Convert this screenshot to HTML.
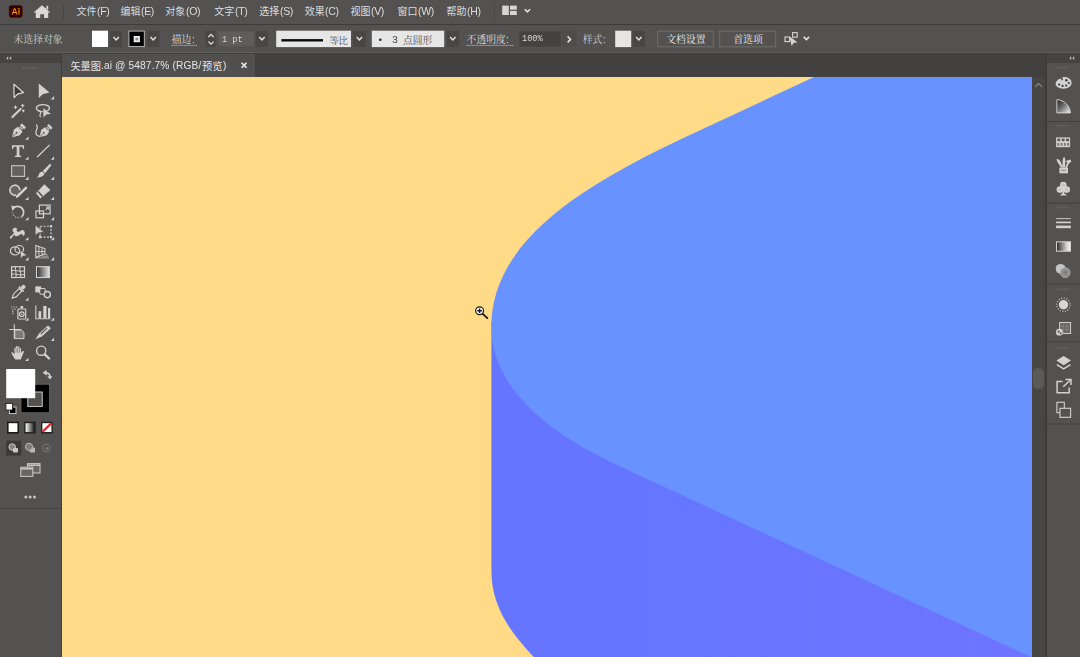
<!DOCTYPE html>
<html lang="zh">
<head>
<meta charset="utf-8">
<title>矢量图.ai @ 5487.7% (RGB/预览)</title>
<style>
*{box-sizing:border-box;margin:0;padding:0}
html,body{width:1080px;height:657px;overflow:hidden;background:#52514f;font-family:"Liberation Sans",sans-serif;color:#e0e0e0}
#app{position:relative;width:1080px;height:657px;overflow:hidden;background:#52514f}
.abs{position:absolute}
#menubar{position:absolute;left:0;top:0;width:1080px;height:24px;background:#535250}
#menuline{position:absolute;left:0;top:24px;width:1080px;height:1px;background:#3d3c3b}
#ctrlbar{position:absolute;left:0;top:25px;width:1080px;height:27px;background:#535250}
#ctrlline{position:absolute;left:0;top:52px;width:1080px;height:1px;background:#5e5d5b}
#tabbar{position:absolute;left:0;top:53px;width:1080px;height:24px;background:#424140}
#tab{position:absolute;left:62px;top:54px;width:193px;height:23px;background:#51504e}
#toolbox{position:absolute;left:0;top:53px;width:61px;height:604px;background:#535250}
#toolhead{position:absolute;left:0;top:53px;width:61px;height:10px;background:#454443}
#toolsep{position:absolute;left:61px;top:53px;width:1px;height:604px;background:#3f3e3d}
#canvas{position:absolute;left:62px;top:77px;width:970px;height:580px;background:#ffda87;overflow:hidden}
#vscroll{position:absolute;left:1032px;top:77px;width:13px;height:580px;background:#474644}
#vthumb{position:absolute;left:1033px;top:368px;width:11px;height:21px;border-radius:5px;background:#5b5a58}
#rsep{position:absolute;left:1045px;top:53px;width:2px;height:604px;background:#3d3c3b}
#rpanel{position:absolute;left:1047px;top:53px;width:33px;height:604px;background:#535250}
#rhead{position:absolute;left:1047px;top:53px;width:33px;height:10px;background:#454443}
.rline{position:absolute;left:1047px;width:33px;height:1px;background:#434241}
.grip{position:absolute;height:2px;opacity:.55;background:repeating-linear-gradient(90deg,#6d6c6a 0 2px,transparent 2px 3px)}
svg{position:absolute;overflow:visible}
.t{position:absolute;white-space:nowrap;line-height:1;will-change:transform}
</style>
</head>
<body>
<div id="app">
  <div id="menubar"></div>
  <div id="menuline"></div>
  <div id="ctrlbar"></div>
  <div id="ctrlline"></div>
  <div id="tabbar"></div>
  <div id="tab"></div>

  <!--TOP-->
<svg id="top" role="img" aria-label="文件 编辑 对象 文字 选择 效果 视图 窗口 帮助 未选择对象 描边 等比 点圆形 不透明度 样式 文档设置 首选项 矢量图 预览" width="1080" height="78" viewBox="0 0 1080 78" style="left:0;top:0">
<rect x="9.2" y="5.4" width="13" height="12" rx="2.2" fill="#330000"/><rect x="9.2" y="5.4" width="13" height="12" rx="2.2" fill="none" stroke="#4a0d05" stroke-width=".6"/>
<path d="M11.6 14.6L14 8.2H15.2L17.6 14.6H16.4L15.9 13.1H13.3L12.8 14.6ZM13.6 12.1H15.6L14.6 9.3ZM18.4 9.6H19.5V14.6H18.4ZM18.3 8.1H19.6V9H18.3Z" fill="#ff9a00"/>
<path d="M42 5.2L50.4 12.4H48.2V18H44V14.2H40.2V18H35.8V12.4H33.6Z" fill="#d8d8d8"/><rect x="46.4" y="5.8" width="1.8" height="3.6" fill="#d8d8d8"/>
<rect x="63" y="5" width="1" height="15" fill="#484746"/>
<rect x="494" y="5" width="1" height="15" fill="#484746"/>
<rect x="502.2" y="5.6" width="6.6" height="9.4" fill="#d6d6d6"/><rect x="510" y="5.6" width="6.8" height="4.1" fill="#d6d6d6"/><rect x="510" y="10.9" width="6.8" height="4.1" fill="#d6d6d6"/>
<path d="M524.7 9.2L527.4 11.9L530.1 9.2" fill="none" stroke="#e2e2e2" stroke-width="1.5"/>
<rect x="92" y="30.7" width="16" height="16.3" fill="#ffffff"/>
<rect x="110.4" y="31" width="11.6" height="16" fill="#484745"/>
<path d="M113.5 37.1L116.2 39.9L118.9 37.1" fill="none" stroke="#e2e2e2" stroke-width="1.5"/>
<rect x="128.9" y="31.1" width="15.4" height="15.5" fill="#000" stroke="#c4c4c4" stroke-width=".9"/><rect x="133.7" y="36" width="6.2" height="6.2" fill="#f2f2f2"/><rect x="135.4" y="37.7" width="2.8" height="2.8" fill="#8a8a8a"/>
<rect x="147.4" y="31" width="12" height="16" fill="#484745"/>
<path d="M150.5 37.1L153.2 39.9L155.9 37.1" fill="none" stroke="#e2e2e2" stroke-width="1.5"/>
<path d="M171.6 45.4H197.6" stroke="#cfcfcf" stroke-width="1" stroke-dasharray="1 1"/>
<rect x="205.4" y="31" width="10" height="16" fill="#484745"/>
<path d="M208.4 37L211 34.4L213.6 37M208.4 41.6L211 44.2L213.6 41.6" fill="none" stroke="#e2e2e2" stroke-width="1.3"/>
<rect x="218.6" y="31.6" width="35.4" height="14.8" fill="#5e5d5b"/>
<rect x="255.6" y="31" width="12.4" height="16" fill="#484745"/>
<path d="M259.3 37.1L262.0 39.9L264.7 37.1" fill="none" stroke="#e2e2e2" stroke-width="1.5"/>
<rect x="276.2" y="30.7" width="74.8" height="16.4" fill="#e6e6e6"/><rect x="281.4" y="39.1" width="41.6" height="2.4" fill="#0a0a0a"/>
<rect x="352.8" y="31" width="13" height="16" fill="#484745"/>
<path d="M356.7 37.1L359.4 39.9L362.1 37.1" fill="none" stroke="#e2e2e2" stroke-width="1.5"/>
<rect x="371.8" y="30.7" width="72.4" height="16.4" fill="#e6e6e6"/><circle cx="380.3" cy="39.8" r="1.3" fill="#222"/>
<rect x="446.8" y="31" width="12.4" height="16" fill="#484745"/>
<path d="M450.1 37.1L452.8 39.9L455.5 37.1" fill="none" stroke="#e2e2e2" stroke-width="1.5"/>
<path d="M466.4 45.4H513.4" stroke="#cfcfcf" stroke-width="1" stroke-dasharray="1 1"/>
<rect x="519.4" y="31.4" width="41.2" height="15.2" fill="#444342"/>
<rect x="562.4" y="31" width="14" height="16" fill="#4e4d4b"/>
<path d="M567.6 36.4L570.6 39.4L567.6 42.4" fill="none" stroke="#e2e2e2" stroke-width="1.5"/>
<rect x="615.2" y="30.7" width="16" height="16.4" fill="#e8e6e4"/>
<rect x="632.6" y="31" width="12.4" height="16" fill="#484745"/>
<path d="M636.1 37.1L638.8 39.9L641.5 37.1" fill="none" stroke="#e2e2e2" stroke-width="1.5"/>
<rect x="657.7" y="31.2" width="55.6" height="15.6" fill="none" stroke="#706f6d" stroke-width="1"/>
<rect x="719.7" y="31.2" width="56" height="15.6" fill="none" stroke="#706f6d" stroke-width="1"/>
<rect x="785" y="37" width="4.6" height="4.6" fill="none" stroke="#d6d6d6" stroke-width="1.1"/><rect x="792.6" y="32.6" width="4.6" height="4.6" fill="none" stroke="#d6d6d6" stroke-width="1.1"/><path d="M789.6 36.6L797.6 42.4L793.8 42.8L791.6 46Z" fill="#d6d6d6"/>
<path d="M803.7 36.9L806.4 39.6L809.1 36.9" fill="none" stroke="#e2e2e2" stroke-width="1.5"/>
<path d="M241.6 62.8L246.6 67.8M246.6 62.8L241.6 67.8" stroke="#ececec" stroke-width="1.6"/>
<g font-family="'Liberation Sans','Noto Sans CJK SC',sans-serif" font-size="10" fill="#dddddd">
<text x="76.5" y="14.9">文件</text>
<text x="120.4" y="14.9">编辑</text>
<text x="165.3" y="14.9">对象</text>
<text x="214.2" y="14.9">文字</text>
<text x="259.3" y="14.9">选择</text>
<text x="304.7" y="14.9">效果</text>
<text x="350.4" y="14.9">视图</text>
<text x="397.6" y="14.9">窗口</text>
<text x="446.5" y="14.9">帮助</text>
</g>
<g font-family="'Liberation Serif','Noto Serif CJK SC',serif" font-size="9.8">
<text x="171.7" y="43.2" fill="#dddddd">描边</text>
<text x="466.6" y="43.2" fill="#dddddd">不透明度</text>
<text x="13.6" y="43.2" fill="#cfcfcf">未选择对象</text>
<text x="582.7" y="43.2" fill="#cfcfcf">样式</text>
<text x="329.2" y="44.2" font-size="9.4" fill="#4a4a4a">等比</text>
<text x="403" y="43.6" font-size="9.8" fill="#4a4a4a">点圆形</text>
<text x="666.3" y="43.2" fill="#ececec">文档设置</text>
<text x="733.4" y="43.2" fill="#ececec">首选项</text>
</g>
<g font-family="'Liberation Sans','Noto Sans CJK SC',sans-serif" font-size="10.2" fill="#e6e6e6">
<text x="70.4" y="69.5">矢量图</text>
<text x="202.1" y="69.5">预览</text>
</g>
</svg>
<span class="t" style="left:96.9px;top:6.1px;font-size:10.5px;color:#dddddd;letter-spacing:-0.32px">(F)</span>
<span class="t" style="left:140.8px;top:6.1px;font-size:10.5px;color:#dddddd;letter-spacing:-0.32px">(E)</span>
<span class="t" style="left:185.6px;top:6.1px;font-size:10.5px;color:#dddddd;letter-spacing:-0.32px">(O)</span>
<span class="t" style="left:234.6px;top:6.1px;font-size:10.5px;color:#dddddd;letter-spacing:-0.32px">(T)</span>
<span class="t" style="left:279.6px;top:6.1px;font-size:10.5px;color:#dddddd;letter-spacing:-0.32px">(S)</span>
<span class="t" style="left:325.1px;top:6.1px;font-size:10.5px;color:#dddddd;letter-spacing:-0.32px">(C)</span>
<span class="t" style="left:370.8px;top:6.1px;font-size:10.5px;color:#dddddd;letter-spacing:-0.32px">(V)</span>
<span class="t" style="left:417.6px;top:6.1px;font-size:10.5px;color:#dddddd;letter-spacing:-0.32px">(W)</span>
<span class="t" style="left:466.8px;top:6.1px;font-size:10.5px;color:#dddddd;letter-spacing:-0.32px">(H)</span>
<span class="t" style="left:191.6px;top:34.7px;font-size:10px;color:#dddddd">:</span>
<span class="t" style="left:221.6px;top:35.5px;font-size:8.6px;color:#d8d8d8;font-family:'Liberation Mono',monospace">1 pt</span>
<span class="t" style="left:392.2px;top:35.6px;font-size:10px;color:#444;font-family:'Liberation Mono',monospace">3</span>
<span class="t" style="left:506.4px;top:34.7px;font-size:10px;color:#dddddd">:</span>
<span class="t" style="left:522.0px;top:35.3px;font-size:8.6px;color:#d8d8d8;font-family:'Liberation Mono',monospace">100%</span>
<span class="t" style="left:602.6px;top:34.7px;font-size:10px;color:#cfcfcf">:</span>
<span class="t" style="left:101.4px;top:60.9px;font-size:10.2px;color:#e6e6e6;letter-spacing:0.12px">.ai @ 5487.7% (RGB/</span>
<span class="t" style="left:222.7px;top:60.9px;font-size:10.2px;color:#e6e6e6;letter-spacing:0.12px">)</span>
<!--/TOP-->

  <!-- CANVAS -->
  <div id="canvas">
    <svg width="970" height="580" viewBox="62 77 970 580" style="left:0;top:0">
      <defs><linearGradient id="db" gradientUnits="userSpaceOnUse" x1="491" y1="0" x2="1032" y2="0"><stop offset="0" stop-color="#6575ff"/><stop offset=".45" stop-color="#6775ff"/><stop offset="1" stop-color="#6f74ff"/></linearGradient></defs>
      <path d="M491.4 322 L491.4 570.9 C491.4 613.8 519.2 647.2 570.7 691.6 L1040 691.6 L1040 322 Z" fill="url(#db)"/>
      <path d="M814 77 L686.6 136.6 C575.2 188.8 491.4 244 491.4 327 L491.4 327 C491.4 406.2 588.4 451.8 624.5 468.5 L1045 663.4 L1045 77 Z" fill="#6892ff"/>
      <circle cx="479.6" cy="310.7" r="3.9" fill="#fbfbfb" stroke="#1c1608" stroke-width="1.2"/>
      <path d="M477.3 310.7h4.6M479.6 308.4v4.6" stroke="#16122a" stroke-width="1.4"/>
      <path d="M482.7 313.9L487.4 318.2" stroke="#15110a" stroke-width="1.7" stroke-linecap="round"/>
    </svg>
  </div>
  <div id="vscroll"></div>
  <div id="vthumb"></div>

  <!-- LEFT TOOLBOX -->
  <div id="toolbox"></div>
  <div id="toolhead"></div>
  <div id="toolsep"></div>
  <div class="grip" style="left:22px;top:67px;width:16px"></div>
  <div class="abs" style="left:0;top:508px;width:61px;height:1px;background:#454443"></div>
  <svg id="tools" width="62" height="657" viewBox="0 0 62 657" style="left:0;top:0">
<!--TOOLS-->
<g transform="translate(10.0 83.0)"><path d="M3.9 1.2 L13.4 9.6 L7.7 11 L4.1 14.6 Z" fill="#3b3a39" stroke="#d2d2d2" stroke-width="1.3" stroke-linejoin="round"/></g>
<g transform="translate(35.5 83.0)"><path d="M3.3 .6 L14 9.6 L7.2 11.2 L3.3 15.1 Z" fill="#d2d2d2"/></g>
<path d="M54.1 96.1v3.3h-3.3z" fill="#d2d2d2"/>
<g transform="translate(10.0 103.1)"><path d="M2.4 14 L10.6 6" fill="none" stroke="#d2d2d2" stroke-width="2.1" stroke-linecap="round"/><path d="M5.5 2.3v3.6M3.7 4.1h3.6M12.6 .9v3.4M10.9 2.6h3.4M13.3 6.3v2.8M11.9 7.7h2.8" fill="none" stroke="#d2d2d2" stroke-width="1.1"/></g>
<g transform="translate(35.5 103.1)"><ellipse cx="7.4" cy="5" rx="6.6" ry="3.5" fill="none" stroke="#d2d2d2" stroke-width="1.3"/><path d="M3.2 7.6c1.8 .6 2.6 2.2 1.6 3.4c-.8 1 -.4 2.2 .4 2.9" fill="none" stroke="#d2d2d2" stroke-width="1.2"/><path d="M7.6 4.6 L16 11 L11 11.6 L7.6 14.8 Z" fill="#d2d2d2" stroke="#535250" stroke-width=".6"/></g>
<g transform="translate(10.0 123.3)"><g transform="rotate(45 8 8)"><rect x="5.1" y="-.4" width="5.8" height="2.7" rx=".5" fill="#d2d2d2"/><rect x="5.9" y="3" width="4.2" height="1.2" fill="#d2d2d2"/><path d="M4.7 4.9H11.3L12.1 9.6L8 16.6L3.9 9.6Z" fill="#d2d2d2"/><path d="M8 16.4V11" stroke="#535250" stroke-width=".8"/><circle cx="8" cy="10" r="1" fill="#535250"/></g></g>
<path d="M28.5 136.4v3.3h-3.3z" fill="#d2d2d2"/>
<g transform="translate(35.5 123.3)"><g transform="translate(1.6 .2) rotate(45 8 8) scale(.94) translate(.5 .5)"><rect x="5.1" y="-.4" width="5.8" height="2.7" rx=".5" fill="#d2d2d2"/><rect x="5.9" y="3" width="4.2" height="1.2" fill="#d2d2d2"/><path d="M4.7 4.9H11.3L12.1 9.6L8 16.6L3.9 9.6Z" fill="#d2d2d2"/><path d="M8 16.4V11" stroke="#535250" stroke-width=".8"/><circle cx="8" cy="10" r="1" fill="#535250"/></g><path d="M1 1.6C3.2 4.4 .6 6.4 .4 8.6S1.4 12.6 4 13" fill="none" stroke="#d2d2d2" stroke-width="1.2" stroke-linecap="round"/></g>
<g transform="translate(10.0 143.4)"><path d="M2 1.9H14.1V5.6H13.1L12.4 3.4H9.4V12.2L11.3 12.7V13.7H4.8V12.7L6.7 12.2V3.4H3.7L3 5.6H2Z" fill="#d2d2d2"/></g>
<path d="M28.5 156.5v3.3h-3.3z" fill="#d2d2d2"/>
<g transform="translate(35.5 143.4)"><path d="M1.9 13.4L13.9 1.7" fill="none" stroke="#d2d2d2" stroke-width="1.3" stroke-linecap="round"/></g>
<path d="M54.1 156.5v3.3h-3.3z" fill="#d2d2d2"/>
<g transform="translate(10.0 163.5)"><rect x="1.6" y="2.2" width="12.9" height="10.7" fill="#636261" stroke="#bebebe" stroke-width="1.2"/></g>
<path d="M28.5 176.6v3.3h-3.3z" fill="#d2d2d2"/>
<g transform="translate(35.5 163.5)"><path d="M14.6 .2L16 1.5L9.6 9.8L7.2 7.6Z" fill="#d2d2d2"/><path d="M7 8.3L8.9 10C8.6 12.6 5.4 14.2 1 13.9C3.2 13 3 11.6 3.6 10.2C4.2 8.8 5.6 8 7 8.3Z" fill="#d2d2d2"/></g>
<path d="M54.1 176.6v3.3h-3.3z" fill="#d2d2d2"/>
<g transform="translate(10.0 183.6)"><circle cx="5" cy="6.5" r="4.9" fill="#686766" stroke="none"/><path d="M6.2 11.4A5 5 0 1 1 9.9 6.6" fill="none" stroke="#d2d2d2" stroke-width="1.6"/><path d="M7 13L16 4.2" fill="none" stroke="#d2d2d2" stroke-width="2.5" stroke-linecap="round"/></g>
<path d="M28.5 196.7v3.3h-3.3z" fill="#d2d2d2"/>
<g transform="translate(35.5 183.6)"><path d="M8.8 .7L14.9 6.4L4.9 14.8L.5 9.6Z" fill="#d2d2d2"/><path d="M2.6 8L7 12.8" stroke="#535250" stroke-width="1.5"/></g>
<path d="M54.1 196.7v3.3h-3.3z" fill="#d2d2d2"/>
<g transform="translate(10.0 203.8)"><path d="M3.4 4.2A6 6 0 1 1 11.8 12.9" fill="none" stroke="#d2d2d2" stroke-width="1.7"/><path d="M11.8 12.9A6 6 0 0 1 2.5 8.6" fill="none" stroke="#d2d2d2" stroke-width="1.2" stroke-dasharray="1.4 1.4" opacity=".75"/><path d="M1.2 1.8L6.4 3L2.4 7Z" fill="#d2d2d2"/></g>
<path d="M28.5 216.9v3.3h-3.3z" fill="#d2d2d2"/>
<g transform="translate(35.5 203.8)"><rect x="3.9" y="1.3" width="10.7" height="8.7" fill="none" stroke="#d2d2d2" stroke-width="1.2"/><rect x=".4" y="7.2" width="7.6" height="6.8" fill="none" stroke="#d2d2d2" stroke-width="1.2"/><path d="M10 6.4L12.8 3.6M10.6 3.2H13.2V5.8" fill="none" stroke="#d2d2d2" stroke-width="1.1"/></g>
<path d="M54.1 216.9v3.3h-3.3z" fill="#d2d2d2"/>
<g transform="translate(10.0 223.9)"><path d="M.8 13.6L5.4 8.6" fill="none" stroke="#d2d2d2" stroke-width="1.3"/><circle cx=".9" cy="13.5" r="1.1" fill="#d2d2d2"/><path d="M2.6 5.4C4.8 2.4 8 4.2 6.8 6.2C5.8 8 8.8 8.6 10.4 7C12.2 5.2 15.2 6.6 14.8 9.6C14.4 12.2 12.8 12.6 12.6 10.8C12.4 9.4 10 10.4 8.6 11.6C6.8 13 4.2 12.6 4.6 10.4C5 8.6 2.2 8.6 2.6 5.4Z" fill="#d2d2d2"/></g>
<path d="M28.5 237.0v3.3h-3.3z" fill="#d2d2d2"/>
<g transform="translate(35.5 223.9)"><rect x="4.6" y="2.3" width="10.9" height="10.9" fill="none" stroke="#d2d2d2" stroke-width="1.1" stroke-dasharray="2 1.4"/><rect x="14.4" y="1.2" width="2.2" height="2.2" fill="#d2d2d2"/><rect x="14.4" y="12.1" width="2.2" height="2.2" fill="#d2d2d2"/><rect x="3.5" y="12.1" width="2.2" height="2.2" fill="#d2d2d2"/><path d="M-.2 1.4L8.4 8.2L3.4 8.6L-.2 11.2Z" fill="#d2d2d2" stroke="#535250" stroke-width=".5"/></g>
<path d="M54.1 237.0v3.3h-3.3z" fill="#d2d2d2"/>
<g transform="translate(10.0 244.0)"><ellipse cx="5" cy="6.9" rx="4.6" ry="4.1" fill="none" stroke="#d2d2d2" stroke-width="1.2"/><ellipse cx="9.3" cy="5.2" rx="4.3" ry="3.7" fill="none" stroke="#d2d2d2" stroke-width="1.2"/><path d="M10.4 6.4L17 11.6L13 12L10.8 14.6Z" fill="#d2d2d2" stroke="#535250" stroke-width=".5"/></g>
<path d="M28.5 257.1v3.3h-3.3z" fill="#d2d2d2"/>
<g transform="translate(35.5 244.0)"><path d="M.3 1.6L9.4 4.6V9.8L.3 13.6Z" fill="none" stroke="#d2d2d2" stroke-width="1.1"/><path d="M3.4 2.6V12.4M6.5 3.6V11.2M.3 7.6H9.4" fill="none" stroke="#d2d2d2" stroke-width="1"/><path d="M9.4 10.6H12M6.5 12.2H13M.3 13.9H13.6" fill="none" stroke="#d2d2d2" stroke-width=".9" opacity=".8"/></g>
<path d="M54.1 257.1v3.3h-3.3z" fill="#d2d2d2"/>
<g transform="translate(10.0 264.2)"><rect x="1.6" y="2.5" width="12.9" height="10.8" fill="none" stroke="#d2d2d2" stroke-width="1.2"/><path d="M1.6 6.4C5 5 10 8.4 14.5 6.6M1.6 10C5 8.8 10 12 14.5 10.2M5.6 2.5C4.4 6 7.4 9.6 5.8 13.3M10.2 2.5C9 6 12 9.6 10.4 13.3" fill="none" stroke="#d2d2d2" stroke-width="1"/></g>
<g transform="translate(35.5 264.2)"><defs><linearGradient id="gt"><stop offset="0" stop-color="#2e2e2e"/><stop offset="1" stop-color="#e4e4e4"/></linearGradient></defs><rect x="1" y="2.5" width="12.9" height="10.8" fill="url(#gt)" stroke="#d2d2d2" stroke-width="1.1"/></g>
<g transform="translate(10.0 284.3)"><g transform="rotate(45 8 8)"><rect x="6" y="-1.6" width="4" height="4.2" rx="1.6" fill="#d2d2d2"/><rect x="4.6" y="2.6" width="6.8" height="1.5" fill="#d2d2d2"/><path d="M6.1 4.6H9.9V12.6L8 16.2L6.1 12.6Z" fill="none" stroke="#d2d2d2" stroke-width="1.1"/></g></g>
<path d="M28.5 297.4v3.3h-3.3z" fill="#d2d2d2"/>
<g transform="translate(35.5 284.3)"><rect x="-.2" y="2.1" width="5.8" height="6" fill="#d2d2d2"/><rect x="4.2" y="4.2" width="5.6" height="5.8" rx="1.6" fill="#535250" stroke="#d2d2d2" stroke-width="1.1"/><circle cx="11.8" cy="10.3" r="3.1" fill="#535250" stroke="#d2d2d2" stroke-width="1.4"/></g>
<g transform="translate(10.0 304.4)"><rect x="7.9" y="4.6" width="7.8" height="10" rx=".8" fill="none" stroke="#d2d2d2" stroke-width="1.2"/><rect x="10.4" y="1.7" width="2.8" height="2.4" fill="#d2d2d2"/><circle cx="11.8" cy="9.8" r="2.3" fill="none" stroke="#d2d2d2" stroke-width="1.2"/><circle cx="11.8" cy="9.8" r=".8" fill="#d2d2d2"/><path d="M1 2.6h1.3M3.4 2.6h1.3M5.8 2.6h1.2M2.2 4.8h1.3M4.6 4.8h1.3M2.2 7h1.3M2.2 9h1.3" fill="none" stroke="#d2d2d2" stroke-width="1.1" opacity=".85"/></g>
<path d="M28.5 317.5v3.3h-3.3z" fill="#d2d2d2"/>
<g transform="translate(35.5 304.4)"><path d="M.3 1.2V14.3H15" fill="none" stroke="#d2d2d2" stroke-width="1.1"/><rect x="3" y="6.8" width="2.7" height="7" fill="#d2d2d2"/><rect x="7.8" y="1.6" width="3.2" height="12.2" fill="#d2d2d2"/><rect x="12.5" y="3.6" width="2.2" height="10.2" fill="#d2d2d2"/></g>
<path d="M54.1 317.5v3.3h-3.3z" fill="#d2d2d2"/>
<g transform="translate(10.0 324.6)"><path d="M4.8 5.4H11.4L14 8V14H4.8Z" fill="#7b7a79" stroke="#d2d2d2" stroke-width="1"/><path d="M4.3 -.3V14.1M-.6 4.9H11" fill="none" stroke="#d2d2d2" stroke-width="1.1"/></g>
<g transform="translate(35.5 324.6)"><path d="M12.4 .8L15.4 3.6L6.6 11.6L-.2 15L3.6 8.8Z" fill="#d2d2d2"/><path d="M5.4 9.4L11.6 3.6" stroke="#535250" stroke-width="1.1"/></g>
<path d="M54.1 337.7v3.3h-3.3z" fill="#d2d2d2"/>
<g transform="translate(10.0 344.7)"><path d="M5.2 14.7C3.6 12.4 2.2 10.4 1.5 8.6C1.2 7.6 2.4 7.2 3 8L4.4 9.8V3.6C4.4 2.5 6 2.5 6 3.6V7V2.2C6 1.1 7.7 1.1 7.7 2.2V7V2.6C7.7 1.5 9.4 1.5 9.4 2.6V7.4V4C9.4 3 11 3 11 4V8.2L12.4 6.6C13.2 5.8 14.4 6.6 13.8 7.6C12.8 9.6 12 12 10.8 14.7Z" fill="#d2d2d2"/><path d="M6 3.4V8M7.7 2.6V8M9.4 3.4V8" stroke="#535250" stroke-width=".55"/></g>
<path d="M28.5 357.8v3.3h-3.3z" fill="#d2d2d2"/>
<g transform="translate(35.5 344.7)"><circle cx="5.7" cy="6" r="4.6" fill="none" stroke="#d2d2d2" stroke-width="1.4"/><path d="M9.2 9.6L13.6 13.8" fill="none" stroke="#d2d2d2" stroke-width="2.3" stroke-linecap="round"/></g>
<rect x="21" y="384.2" width="28.6" height="28.6" fill="#000" stroke="#6e6d6b" stroke-width=".8"/>
<rect x="27.8" y="392" width="14.4" height="14.4" fill="#535250" stroke="#dcdcdc" stroke-width=".9"/>
<rect x="6.2" y="369" width="29" height="29.2" fill="#ffffff"/>
<path d="M45.2 373.2C48.6 372.6 50.2 374.4 50 377.4" fill="none" stroke="#d2d2d2" stroke-width="1.6"/><path d="M42.6 372.8L46.6 370V375.6Z" fill="#d2d2d2"/><path d="M47.4 376.2H52.4L49.9 379.6Z" fill="#d2d2d2"/>
<rect x="9.4" y="407" width="6.6" height="6.6" fill="#000" stroke="#d8d8d8" stroke-width=".9"/><rect x="5.9" y="403.4" width="6.6" height="6.6" fill="#fff" stroke="#222" stroke-width=".9"/>
<rect x="7" y="421.6" width="12" height="12" fill="#1c1c1c"/><rect x="8.6" y="423.2" width="8.8" height="8.8" fill="#fff"/>
<defs><linearGradient id="g2"><stop offset="0" stop-color="#fff"/><stop offset="1" stop-color="#1a1a1a"/></linearGradient></defs><rect x="24.2" y="421.6" width="11.6" height="12" fill="#262626"/><rect x="25.6" y="423.2" width="8.8" height="8.8" fill="url(#g2)"/>
<rect x="41" y="421.6" width="11.8" height="12" fill="#262626"/><rect x="42.4" y="423.2" width="9" height="8.8" fill="#fff"/><path d="M42.6 431.8L51.2 423.4" stroke="#e0242c" stroke-width="2.3"/>
<rect x="6.2" y="440.8" width="15" height="14.6" rx="1" fill="#3b3a39"/>
<g opacity="1"><circle cx="12.2" cy="447.0" r="3.3" fill="#858585" stroke="#c4c4c4" stroke-width="1"/><rect x="13.0" y="448.0" width="5" height="4.6" rx=".8" fill="#c8c8c8"/></g>
<g opacity=".8"><rect x="29.6" y="447.6" width="5.4" height="5" rx=".8" fill="#d2d2d2"/><circle cx="29" cy="446.8" r="3.6" fill="#8a8a8a" stroke="#d2d2d2" stroke-width="1"/></g>
<g opacity=".28"><circle cx="46.4" cy="448" r="3.8" fill="none" stroke="#d2d2d2" stroke-width="1.1"/><circle cx="47" cy="448.6" r="1.6" fill="#d2d2d2"/></g>
<rect x="27.6" y="463.6" width="12.4" height="9.4" fill="#676665" stroke="#c4c4c4" stroke-width="1.1"/><path d="M27.6 465.2H40" stroke="#c4c4c4" stroke-width="1.6"/><rect x="20.8" y="467.2" width="12" height="9.2" fill="#676665" stroke="#c4c4c4" stroke-width="1.1"/><path d="M20.8 468.8H32.8" stroke="#c4c4c4" stroke-width="1.6"/>
<circle cx="25.9" cy="497" r="1.5" fill="#c6c6c6"/><circle cx="30.2" cy="497" r="1.5" fill="#c6c6c6"/><circle cx="34.5" cy="497" r="1.5" fill="#c6c6c6"/>
<path d="M8.2 56.3L6.4 58.2L8.2 60.1ZM11.2 56.3L9.4 58.2L11.2 60.1Z" fill="#c8c8c8"/>
<!--/TOOLS-->
  </svg>

  <!-- RIGHT PANEL -->
  <div id="rsep"></div>
  <div id="rpanel"></div>
  <div id="rhead"></div>
  <svg id="rp" width="48" height="657" viewBox="1032 0 48 657" style="left:1032px;top:0">
<!--RP-->
<path d="M1071.2 56.3L1069.4 58.2L1071.2 60.1ZM1074.2 56.3L1072.4 58.2L1074.2 60.1Z" fill="#c8c8c8"/>
<path d="M1035.2 86.9L1038.6 83.5L1042 86.9" fill="none" stroke="#8c8b89" stroke-width="1.2"/>
<rect x="1047" y="121.0" width="33" height="1" fill="#41403f"/>
<rect x="1047" y="202.5" width="33" height="1" fill="#41403f"/>
<rect x="1047" y="283.5" width="33" height="1" fill="#41403f"/>
<rect x="1047" y="341.3" width="33" height="1" fill="#41403f"/>
<rect x="1047" y="423.5" width="33" height="1" fill="#41403f"/>
<path d="M1055.5 67.5H1070.5" stroke="#6b6a68" stroke-width="2" stroke-dasharray="1.8 1.2" opacity=".7"/>
<path d="M1055.5 125.8H1070.5" stroke="#6b6a68" stroke-width="2" stroke-dasharray="1.8 1.2" opacity=".7"/>
<path d="M1055.5 207.5H1070.5" stroke="#6b6a68" stroke-width="2" stroke-dasharray="1.8 1.2" opacity=".7"/>
<path d="M1055.5 289.6H1070.5" stroke="#6b6a68" stroke-width="2" stroke-dasharray="1.8 1.2" opacity=".7"/>
<path d="M1055.5 347.8H1070.5" stroke="#6b6a68" stroke-width="2" stroke-dasharray="1.8 1.2" opacity=".7"/>
<path d="M1060.6 78.4C1058 79.2 1055.6 81 1055.6 83.6C1055.6 86.6 1059 88.7 1063.4 88.7C1068 88.7 1071.6 86.4 1071.6 82.8C1071.6 79.4 1068.4 76.9 1064.4 76.9C1063.2 76.9 1062.2 77.2 1062.4 78C1062.6 78.8 1063.4 79.4 1062.8 80.2C1062.2 80.8 1061.4 79.8 1060.6 78.4Z" fill="#d2d2d2"/>
<circle cx="1059.2" cy="84.6" r="1.1" fill="#3a3938"/>
<circle cx="1062.6" cy="85.9" r="1.1" fill="#3a3938"/>
<circle cx="1066.2" cy="85.5" r="1.1" fill="#3a3938"/>
<circle cx="1068.8" cy="83" r="1.1" fill="#3a3938"/>
<circle cx="1066.4" cy="80.2" r="1.2" fill="#3a3938"/>
<defs><linearGradient id="cg" x1="0" y1="0" x2="1" y2="1"><stop offset="0" stop-color="#1e1e1e"/><stop offset=".45" stop-color="#6a6a6a"/><stop offset="1" stop-color="#f0f0f0"/></linearGradient></defs>
<path d="M1056.9 99.6C1064 100 1069.8 105.4 1070.4 112.9H1056.9Z" fill="url(#cg)" stroke="#d2d2d2" stroke-width="1"/>
<rect x="1056.1" y="137.4" width="14" height="9.8" fill="#d2d2d2"/>
<rect x="1057.3" y="138.6" width="2.9" height="2.6" fill="#5a5958"/>
<rect x="1061.7" y="138.6" width="2.9" height="2.6" fill="#5a5958"/>
<rect x="1066.1" y="138.6" width="2.9" height="2.6" fill="#5a5958"/>
<rect x="1057.3" y="143" width="1.9" height="2.8" fill="#777675"/>
<rect x="1060.6" y="143" width="1.9" height="2.8" fill="#777675"/>
<rect x="1063.9" y="143" width="1.9" height="2.8" fill="#777675"/>
<rect x="1067.2" y="143" width="1.9" height="2.8" fill="#777675"/>
<path d="M1059.4 167.6H1068V173.3H1059.4Z" fill="#d2d2d2"/><path d="M1061.2 169.6H1066.2V171.2H1061.2Z" fill="#9b9a99"/>
<path d="M1062.3 167.6L1062.7 160.6C1062.7 158.4 1064 157 1064.1 156.4C1064.4 157.2 1065.6 158.6 1065.4 160.6L1065 167.6Z" fill="#d2d2d2"/>
<path d="M1061.2 167.8L1057.8 162.6C1056.8 160.8 1056.6 159.4 1056.8 158.6C1057.8 159 1059.4 159.8 1060.4 161.4L1062.8 167Z" fill="#d2d2d2"/>
<path d="M1065 167.4L1067.2 163L1065.8 161L1070.2 159.6L1071.4 161.6L1068.8 163.8L1066.8 168Z" fill="#d2d2d2"/>
<circle cx="1063.3" cy="185" r="3.3" fill="#d2d2d2"/><circle cx="1059.9" cy="189.6" r="3.3" fill="#d2d2d2"/><circle cx="1066.7" cy="189.6" r="3.3" fill="#d2d2d2"/><path d="M1062.6 188H1064L1064.4 193.4L1067 195.4H1059.6L1062.2 193.4Z" fill="#d2d2d2"/>
<circle cx="1063.3" cy="185" r="1.5" fill="#c2c2c2"/>
<circle cx="1059.9" cy="189.6" r="1.5" fill="#c2c2c2"/>
<circle cx="1066.7" cy="189.6" r="1.5" fill="#c2c2c2"/>
<path d="M1056.1 218.6H1070.9" stroke="#d2d2d2" stroke-width=".9"/><path d="M1056.1 222.4H1070.9" stroke="#d2d2d2" stroke-width="1.7"/><path d="M1056.1 226.9H1070.9" stroke="#d2d2d2" stroke-width="2.6"/>
<defs><linearGradient id="gp"><stop offset="0" stop-color="#262626"/><stop offset=".75" stop-color="#d8d8d8"/><stop offset="1" stop-color="#f2f2f2"/></linearGradient></defs>
<rect x="1056.5" y="241.8" width="14" height="9.4" fill="url(#gp)" stroke="#d2d2d2" stroke-width="1"/>
<circle cx="1060.6" cy="268.8" r="4.9" fill="#c4c4c4"/><circle cx="1065.2" cy="272.6" r="4.9" fill="#8e8e8e" stroke="#b4b4b4" stroke-width=".8"/><circle cx="1065.2" cy="272.6" r="2.4" fill="#7c7c7c" stroke="#9c9c9c" stroke-width=".6"/>
<circle cx="1063.5" cy="304.8" r="4.7" fill="#d6d6d6"/><circle cx="1063.5" cy="304.8" r="6.7" fill="none" stroke="#d2d2d2" stroke-width="1.3" stroke-dasharray="1.1 1.53" opacity=".85"/>
<rect x="1059.6" y="322.5" width="11" height="11" fill="#686766" stroke="#d2d2d2" stroke-width="1"/><path d="M1063.3 322.5V333.5M1066.9 322.5V333.5M1059.6 326.2H1070.6M1059.6 329.8H1070.6" stroke="#8d8c8b" stroke-width=".6"/><circle cx="1059.4" cy="332.2" r="3.4" fill="#d2d2d2"/><circle cx="1058.6" cy="331.6" r="1.1" fill="#555"/><circle cx="1060.6" cy="333.2" r="1" fill="#555"/>
<path d="M1063.6 355.9L1071 360.6L1063.6 365.3L1056.4 360.6Z" fill="#d2d2d2"/><path d="M1056.9 364.6L1063.6 368.9L1070.5 364.6" fill="none" stroke="#d2d2d2" stroke-width="1.5"/>
<path d="M1062.6 381.6H1057.1V392.7H1069.2V387.4" fill="none" stroke="#d2d2d2" stroke-width="1.5"/><path d="M1063.2 386.8L1070.2 380.2" fill="none" stroke="#d2d2d2" stroke-width="1.5"/><path d="M1065.4 379.4H1071V385" fill="none" stroke="#d2d2d2" stroke-width="1.5"/>
<rect x="1056.9" y="402.3" width="7.4" height="10.4" fill="none" stroke="#d2d2d2" stroke-width="1.1"/><rect x="1060" y="408.3" width="10.6" height="9" fill="#535250" stroke="#d2d2d2" stroke-width="1.1"/>
<!--/RP-->
  </svg>
</div>
</body>
</html>
